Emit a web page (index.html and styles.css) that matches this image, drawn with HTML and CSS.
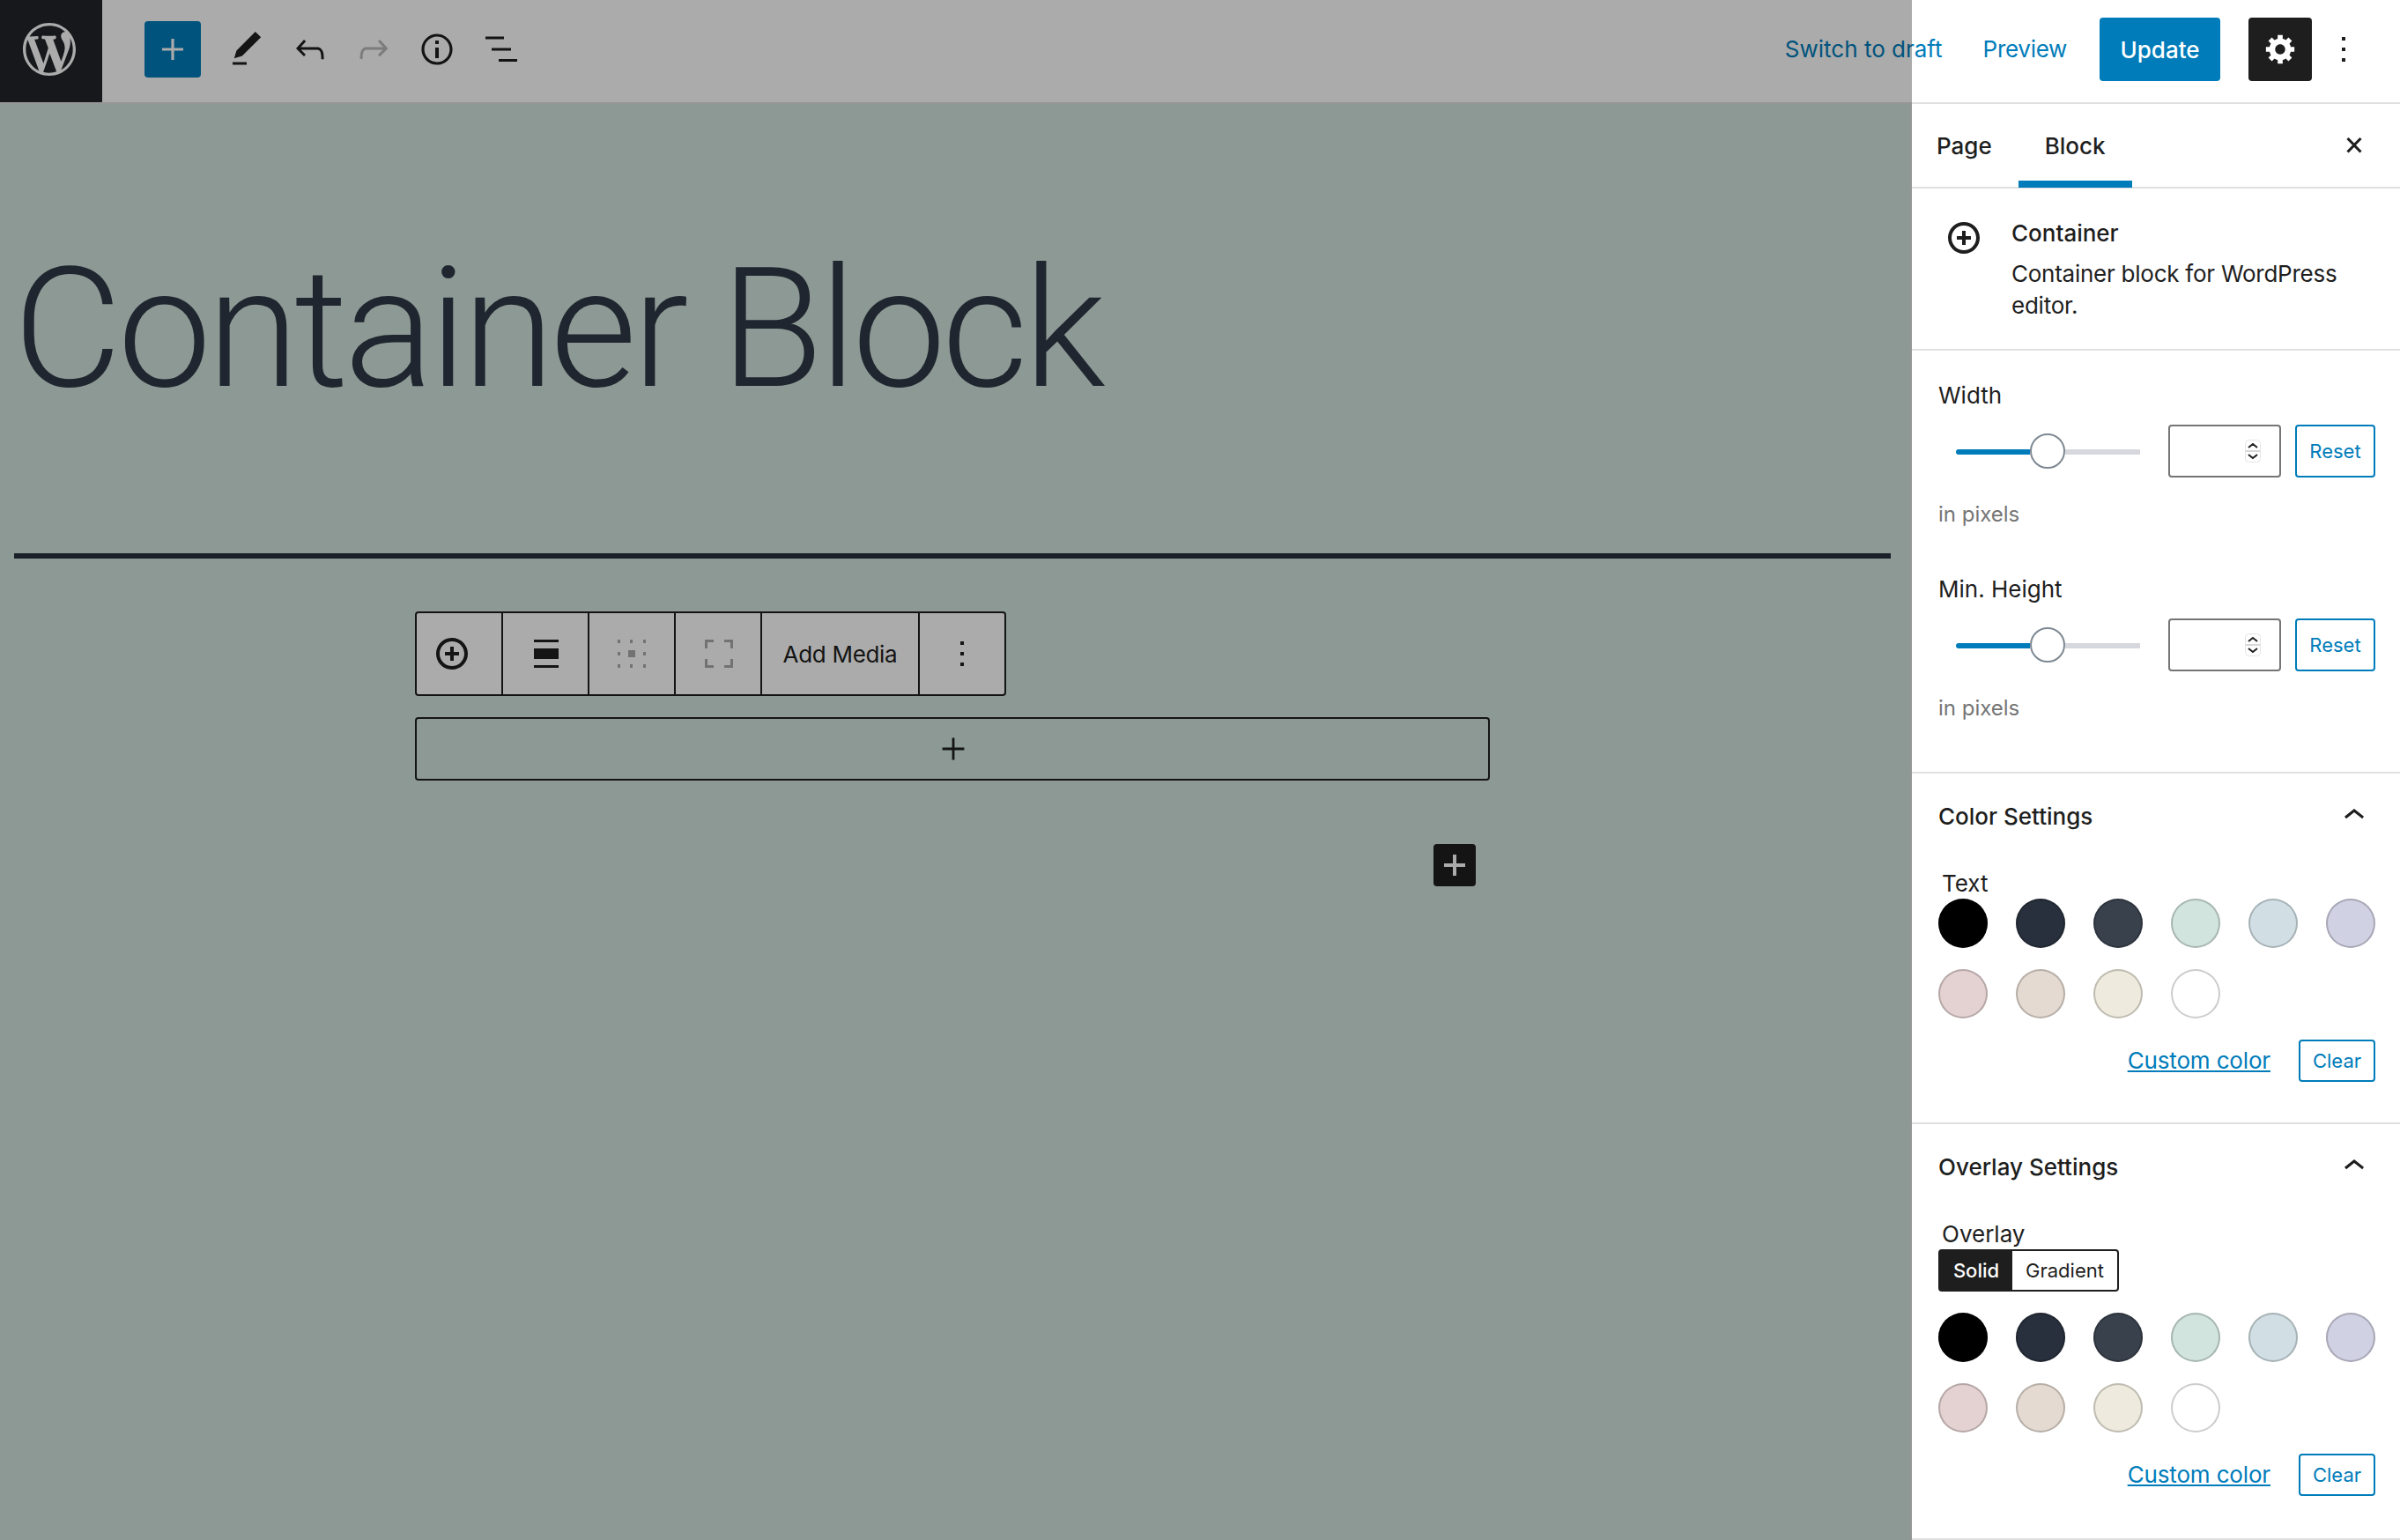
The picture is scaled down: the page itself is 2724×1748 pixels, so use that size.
FILE: index.html
```html
<!DOCTYPE html>
<html lang="en">

<head>
    <meta charset="UTF-8">
    <meta name="viewport" content="width=device-width, initial-scale=1.0">
    <title>Edit Page</title>
    <link rel="stylesheet" href="styles.css">
</head>

<body>
    <div class="app">
        <header class="topbar">
            <div class="wp-logo">
                <svg class="wp-mark" viewBox="0 0 20 20"><path d="M20 10c0-5.51-4.49-10-10-10C4.48 0 0 4.49 0 10c0 5.52 4.48 10 10 10 5.51 0 10-4.48 10-10zM7.78 15.37L4.37 6.22c.55-.02 1.17-.08 1.17-.08.5-.06.44-1.13-.06-1.11 0 0-1.45.11-2.37.11-.18 0-.37 0-.58-.01C4.12 2.69 6.87 1.11 10 1.11c2.33 0 4.45.87 6.05 2.34-.68-.11-1.65.39-1.65 1.58 0 .74.45 1.36.9 2.1.35.61.55 1.36.55 2.46 0 1.49-1.4 5-1.4 5l-3.03-8.37c.54-.02.82-.17.82-.17.5-.05.44-1.25-.06-1.22 0 0-1.44.12-2.38.12-.87 0-2.33-.12-2.33-.12-.5-.03-.56 1.2-.06 1.22l.92.08 1.26 3.41zM17.41 10c.24-.64.74-1.87.43-4.25.7 1.29 1.05 2.71 1.05 4.25 0 3.29-1.73 6.24-4.4 7.78.97-2.59 1.94-5.2 2.92-7.78zM6.1 18.09C3.12 16.65 1.11 13.53 1.11 10c0-1.3.23-2.48.72-3.59C3.25 10.3 4.67 14.2 6.1 18.09zm4.03-6.63l2.58 6.98c-.86.29-1.76.45-2.71.45-.79 0-1.57-.11-2.29-.33.81-2.38 1.62-4.74 2.42-7.1z"/></svg>
            </div>
            <div class="tools">
                <button class="add-btn"><svg class="icon" viewBox="0 0 24 24"><path d="M18 11.2h-5.2V6h-1.6v5.2H6v1.6h5.2V18h1.6v-5.2H18z"/></svg></button>
                <svg class="icon" viewBox="0 0 24 24"><path d="M20.1 5.1L16.9 2 6.2 12.7l-1.3 4.4 4.5-1.3L20.1 5.1zM4 20.8h8v-1.5H4v1.5z"/></svg>
                <svg class="icon" viewBox="0 0 24 24"><path d="M18.3 11.7c-.6-.6-1.4-.9-2.3-.9H6.7l2.9-3.3-1.1-1-4.5 5L8.5 16l1-1-2.7-2.7H16c.5 0 .9.2 1.3.5 1 1 1 3.4 1 4.5v.3h1.5v-.2c0-1.5 0-4.3-1.5-5.7z"/></svg>
                <svg class="icon icon-off" viewBox="0 0 24 24"><path d="M15.6 6.5l-1.1 1 2.9 3.3H8c-.9 0-1.7.3-2.3.9-1.4 1.5-1.4 4.2-1.4 5.6v.2h1.5v-.3c0-1.1 0-3.5 1-4.5.3-.3.7-.5 1.3-.5h9.2L14.5 15l1.1 1.1 4.6-4.6-4.6-5z"/></svg>
                <svg class="icon" viewBox="0 0 24 24"><path d="M12 3.2c-4.8 0-8.8 3.9-8.8 8.8 0 4.8 3.9 8.8 8.8 8.8 4.8 0 8.8-3.9 8.8-8.8 0-4.8-4-8.8-8.8-8.8zm0 16c-4 0-7.2-3.3-7.2-7.2C4.8 8 8 4.8 12 4.8s7.2 3.3 7.2 7.2c0 4-3.2 7.2-7.2 7.2zM11 17h2v-6h-2v6zm0-8h2V7h-2v2z"/></svg>
                <svg class="icon" viewBox="0 0 24 24"><path d="M3.5 4.8H14v1.5H3.5zM7 11.2h11v1.5H7zM11 17.5h10.5V19H11z"/></svg>
            </div>
            <div class="publish">
                <a class="link-btn link-draft">Switch to draft</a>
                <a class="link-btn link-preview">Preview</a>
                <button class="update-btn">Update</button>
                <button class="gear-btn"><svg class="gear" viewBox="-0.5 0.5 20 20"><path d="M18 12h-2.18c-.17.7-.44 1.35-.81 1.93l1.54 1.54-2.1 2.1-1.54-1.54c-.58.36-1.23.63-1.91.79V19H8v-2.18c-.68-.16-1.33-.43-1.91-.79l-1.54 1.54-2.12-2.12 1.54-1.54c-.36-.58-.63-1.23-.79-1.91H1V9.03h2.17c.16-.7.44-1.35.8-1.94L2.43 5.55l2.1-2.1 1.54 1.54c.58-.37 1.24-.64 1.93-.81V2h3v2.18c.68.16 1.33.43 1.91.79l1.54-1.54 2.12 2.12-1.54 1.54c.36.59.64 1.24.8 1.94H18V12zm-8.5 1.5c1.66 0 3-1.34 3-3s-1.34-3-3-3-3 1.34-3 3 1.34 3 3 3z"/></svg></button>
                <svg class="icon kebab" viewBox="0 0 24 24"><path d="M13 19h-2v-2h2v2zm0-6h-2v-2h2v2zm0-6h-2V5h2v2z"/></svg>
            </div>
        </header>

        <div class="workspace">
            <main class="editor">
                <h1 class="page-title">Container Block</h1>
                <hr class="title-rule">
                <div class="block-area">
                    <div class="block-toolbar">
                        <div class="tb-item"><svg class="tb-circle" viewBox="0 0 20 20"><path d="M10 1c-5 0-9 4-9 9s4 9 9 9 9-4 9-9-4-9-9-9zm0 16c-3.9 0-7-3.1-7-7s3.1-7 7-7 7 3.1 7 7-3.1 7-7 7zm1-11H9v3H6v2h3v3h2v-3h3V9h-3V6z"/></svg></div>
                        <div class="tb-item"><svg class="icon" viewBox="0 0 48 48"><path d="M11 8h28v3H11zM11 18h28v12H11zM11 37h28v3H11z"/></svg></div>
                        <div class="tb-item tb-off"><svg class="icon" viewBox="0 0 48 48"><path d="M8 8h3v4H8zM22 8h3v4h-3zM37 8h3v4h-3zM8 22h3v4H8zM20 20h8v8h-8zM37 22h3v4h-3zM8 36h3v4H8zM22 36h3v4h-3zM37 36h3v4h-3z"/></svg></div>
                        <div class="tb-item tb-off"><svg class="icon" viewBox="0 0 48 48"><path d="M9 8h10v3h-7v7H9zM31 8h10v10h-3v-7h-7zM9 30h3v7h7v3H9zM38 30h3v10H31v-3h7z"/></svg></div>
                        <div class="tb-item tb-text">Add Media</div>
                        <div class="tb-item tb-last"><svg class="icon" viewBox="0 0 24 24"><path d="M13 19h-2v-2h2v2zm0-6h-2v-2h2v2zm0-6h-2V5h2v2z"/></svg></div>
                    </div>
                    <div class="inserter"><svg class="icon" viewBox="0 0 24 24"><path d="M18.2 11.3h-5.5V5.800h-1.400v5.500H5.800v1.400h5.500v5.500h1.400v-5.500h5.500z"/></svg></div>
                    <div class="append-row">
                        <button class="append-btn"><svg class="icon" viewBox="0 0 24 24"><path d="M18 11h-5V6h-2v5H6v2h5v5h2v-5h5z"/></svg></button>
                    </div>
                </div>
            </main>

            <aside class="sidebar">
                <div class="tabs">
                    <span class="tab tab-first">Page</span>
                    <span class="tab tab-active">Block</span>
                    <svg class="icon close" viewBox="0 0 24 24"><path d="M13 11.900l3.300-3.400-1.100-1-3.200 3.300-3.200-3.300-1.100 1 3.300 3.400-3.300 3.400 1.100 1 3.200-3.300 3.200 3.300 1.100-1z"/></svg>
                </div>

                <section class="panel block-card">
                    <svg class="card-icon" viewBox="0 0 20 20"><path d="M10 1c-5 0-9 4-9 9s4 9 9 9 9-4 9-9-4-9-9-9zm0 16c-3.900 0-7-3.100-7-7s3.100-7 7-7 7 3.100 7 7-3.100 7-7 7zm1-11H9v3H6v2h3v3h2v-3h3V9h-3V6z"/></svg>
                    <div>
                        <div class="card-title">Container</div>
                        <div class="card-desc">Container block for WordPress editor.</div>
                    </div>
                </section>

                <section class="panel sizes">
                    <div class="field-label">Width</div>
                    <div class="range-row">
                        <div class="slider"><span class="slider-fill"></span><span class="slider-thumb"></span><span class="slider-rest"></span></div>
                        <div class="num-input">
                            <svg class="spin" viewBox="0 0 18 26"><rect x="0.500" y="0.500" width="17" height="25" rx="4" fill="#fff" stroke="#e4e4e4"/><path d="M1 13h16" stroke="#d8d8d8" stroke-width="2"/><path d="M4 9l5-4 5 4M4 17l5 4 5-4" fill="none" stroke="#1e1e1e" stroke-width="2"/></svg>
                        </div>
                        <button class="small-btn reset-btn">Reset</button>
                    </div>
                    <div class="help">in pixels</div>

                    <div class="field-label field-next">Min. Height</div>
                    <div class="range-row">
                        <div class="slider"><span class="slider-fill"></span><span class="slider-thumb"></span><span class="slider-rest"></span></div>
                        <div class="num-input">
                            <svg class="spin" viewBox="0 0 18 26"><rect x="0.500" y="0.500" width="17" height="25" rx="4" fill="#fff" stroke="#e4e4e4"/><path d="M1 13h16" stroke="#d8d8d8" stroke-width="2"/><path d="M4 9l5-4 5 4M4 17l5 4 5-4" fill="none" stroke="#1e1e1e" stroke-width="2"/></svg>
                        </div>
                        <button class="small-btn reset-btn">Reset</button>
                    </div>
                    <div class="help">in pixels</div>
                </section>

                <section class="panel colors">
                    <div class="panel-head">
                        <span>Color Settings</span>
                        <svg class="icon chevron" viewBox="0 0 24 24"><path d="M6.500 12.400L12 8l5.500 4.400-.9 1.200L12 10l-4.500 3.600-1-1.200z"/></svg>
                    </div>
                    <div class="color-label">Text</div>
                    <div class="swatches">
                        <span class="swatch c-black"></span><span class="swatch c-dark"></span><span class="swatch c-slate"></span><span class="swatch c-green"></span><span class="swatch c-blue"></span><span class="swatch c-purple"></span>
                        <span class="swatch c-red"></span><span class="swatch c-orange"></span><span class="swatch c-yellow"></span><span class="swatch c-white"></span>
                    </div>
                    <div class="color-actions">
                        <a class="custom-link">Custom color</a>
                        <button class="small-btn clear-btn">Clear</button>
                    </div>
                </section>

                <section class="panel colors colors-last">
                    <div class="panel-head">
                        <span>Overlay Settings</span>
                        <svg class="icon chevron" viewBox="0 0 24 24"><path d="M6.500 12.400L12 8l5.500 4.400-.9 1.200L12 10l-4.500 3.600-1-1.200z"/></svg>
                    </div>
                    <div class="color-label">Overlay</div>
                    <div class="toggle">
                        <span class="toggle-item toggle-on">Solid</span>
                        <span class="toggle-item">Gradient</span>
                    </div>
                    <div class="swatches">
                        <span class="swatch c-black"></span><span class="swatch c-dark"></span><span class="swatch c-slate"></span><span class="swatch c-green"></span><span class="swatch c-blue"></span><span class="swatch c-purple"></span>
                        <span class="swatch c-red"></span><span class="swatch c-orange"></span><span class="swatch c-yellow"></span><span class="swatch c-white"></span>
                    </div>
                    <div class="color-actions">
                        <a class="custom-link">Custom color</a>
                        <button class="small-btn clear-btn">Clear</button>
                    </div>
                </section>
            </aside>
        </div>

        <div class="dim-overlay"></div>
    </div>
</body>

</html>
```

FILE: styles.css
```css
* {
    box-sizing: border-box;
}

body {
    margin: 0;
    font-family: Inter, "Noto Sans", sans-serif;
    font-size: 26px;
    line-height: 36px;
    color: #1e1e1e;
    background-color: #fff;
}

button {
    font-family: inherit;
    padding: 0;
    border: 0;
    cursor: pointer;
}

.app {
    position: relative;
    display: flex;
    flex-direction: column;
    height: 1748px;
    overflow: hidden;
}

.dim-overlay {
    position: absolute;
    top: 0;
    left: 0;
    bottom: 0;
    width: 2170px;
    background-color: rgba(0, 0, 0, 0.33);
    pointer-events: none;
}

.icon {
    display: block;
    width: 48px;
    height: 48px;
    flex: none;
    fill: currentColor;
}

/* top bar */
.topbar {
    display: flex;
    align-items: center;
    height: 118px;
    flex: none;
    border-bottom: 2px solid #e0e0e0;
}

.wp-logo {
    display: flex;
    align-items: center;
    justify-content: center;
    width: 116px;
    height: 116px;
    padding: 0 4px 4px 0;
    background-color: #21242a;
}

.wp-mark {
    width: 60px;
    height: 60px;
    fill: #fff;
}

.tools {
    display: flex;
    align-items: center;
    gap: 24px;
    margin-left: 48px;
    margin-bottom: 4px;
}

.add-btn {
    display: flex;
    align-items: center;
    justify-content: center;
    width: 64px;
    height: 64px;
    margin-right: 4px;
    border-radius: 4px;
    color: #fff;
    background-color: #007cba;
}

.icon-off {
    opacity: 0.3;
}

.publish {
    display: flex;
    align-items: center;
    margin-left: auto;
    margin-bottom: 4px;
    padding-right: 40px;
}

.link-btn {
    color: #007cba;
}

.link-draft {
    margin-right: 46px;
}

.link-preview {
    margin-right: 37px;
    letter-spacing: -0.3px;
}

.update-btn {
    width: 137px;
    height: 72px;
    margin-right: 32px;
    border-radius: 4px;
    font-size: 26px;
    font-weight: 500;
    color: #fff;
    background-color: #007cba;
}

.gear-btn {
    display: flex;
    align-items: center;
    justify-content: center;
    width: 72px;
    height: 72px;
    margin-right: 12px;
    border-radius: 4px;
    background-color: #1e1e1e;
}

.gear {
    width: 38px;
    height: 38px;
    fill: #fff;
}

/* editor canvas */
.workspace {
    display: flex;
    flex: 1;
    min-height: 0;
}

.editor {
    flex: 1;
    padding: 0 22px 0 16px;
    background-color: #d1e4dd;
}

.page-title {
    margin: 155px 0 0 -1px;
    height: 200px;
    font-family: Roboto, sans-serif;
    font-size: 190px;
    font-weight: 300;
    line-height: 200px;
    letter-spacing: -5px;
    color: #303946;
}

.title-rule {
    height: 6px;
    margin: 155px 0 60px;
    border: 0;
    background-color: #28303d;
}

.block-area {
    width: 1220px;
    margin-left: 455px;
}

.block-toolbar {
    display: flex;
    width: 671px;
    height: 96px;
    border: 2px solid #1e1e1e;
    border-radius: 4px;
    background-color: #fff;
}

.tb-item {
    display: flex;
    align-items: center;
    justify-content: center;
    width: 98px;
    border-right: 2px solid #1e1e1e;
}

.tb-circle {
    width: 40px;
    height: 40px;
    margin-right: 16px;
    fill: currentColor;
}

.tb-off {
    color: #aaa;
}

.tb-text {
    width: 179px;
    padding-top: 2px;
    letter-spacing: -0.3px;
}

.tb-last {
    width: 96px;
    border-right: 0;
}

.inserter {
    display: flex;
    align-items: center;
    justify-content: center;
    height: 72px;
    margin-top: 24px;
    padding-left: 2px;
    border: 2px solid #1e1e1e;
    border-radius: 4px;
}

.append-row {
    display: flex;
    justify-content: flex-end;
    margin-top: 72px;
    padding-right: 16px;
}

.append-btn {
    display: flex;
    align-items: center;
    justify-content: center;
    width: 48px;
    height: 48px;
    border-radius: 4px;
    color: #fff;
    background-color: #1e1e1e;
}

/* settings sidebar */
.sidebar {
    width: 556px;
    flex: none;
    display: flex;
    flex-direction: column;
    border-left: 2px solid #e0e0e0;
    background-color: #fff;
}

.tabs {
    display: flex;
    align-items: flex-start;
    height: 96px;
    flex: none;
    border-bottom: 2px solid #e0e0e0;
}

.tab {
    display: flex;
    align-items: center;
    height: 95px;
    padding: 0 30px;
    font-weight: 500;
}

.tab-first {
    padding: 0 30px 0 28px;
}

.tab-active {
    box-shadow: inset 0 -8px 0 #007cba;
}

.close {
    margin: 23px 28px 0 auto;
}

.panel {
    padding: 0 28px 0 30px;
    border-bottom: 2px solid #e0e0e0;
}

.block-card {
    display: flex;
    height: 184px;
    padding-top: 33px;
}

.card-icon {
    flex: none;
    width: 40px;
    height: 40px;
    margin: 3px 34px 0 9px;
    fill: currentColor;
}

.card-title {
    margin-bottom: 10px;
    font-weight: 500;
}

.card-desc {
    width: 400px;
    letter-spacing: -0.25px;
}

.sizes {
    height: 480px;
    padding-top: 33px;
}

.field-label {
    margin-bottom: 15px;
}

.field-next {
    margin-top: 49px;
}

.range-row {
    display: flex;
    align-items: center;
    height: 60px;
    padding-left: 20px;
}

.slider {
    display: flex;
    align-items: center;
    width: 209px;
    margin-right: 32px;
}

.slider-fill {
    width: 84px;
    height: 6px;
    margin-top: 2px;
    border-radius: 3px 0 0 3px;
    background-color: #007cba;
}

.slider-thumb {
    width: 40px;
    height: 40px;
    border: 2px solid #7e8993;
    border-radius: 50%;
    background-color: #fff;
}

.slider-rest {
    flex: 1;
    height: 6px;
    margin-top: 2px;
    background-color: #d7d8de;
}

.num-input {
    display: flex;
    align-items: center;
    justify-content: flex-end;
    width: 128px;
    height: 60px;
    margin-right: 16px;
    padding-right: 21px;
    border: 2px solid #757575;
    border-radius: 4px;
}

.spin {
    width: 18px;
    height: 26px;
}

.small-btn {
    border: 2px solid #007cba;
    border-radius: 4px;
    font-size: 22px;
    color: #007cba;
    background-color: #fff;
}

.reset-btn {
    width: 91px;
    height: 60px;
}

.help {
    margin-top: 24px;
    font-size: 24px;
    color: #757575;
}

.colors {
    flex: none;
    padding-top: 31px;
    padding-bottom: 46px;
}

.colors-last {
    padding-bottom: 48px;
}

.panel-head {
    display: flex;
    align-items: center;
    justify-content: space-between;
    height: 36px;
    font-weight: 500;
}

.chevron {
    margin-top: -2px;
}

.color-label {
    height: 34px;
    margin-top: 41px;
    padding-left: 4px;
    line-height: 34px;
}

.toggle {
    display: flex;
    width: 205px;
    height: 48px;
    border: 2px solid #1e1e1e;
    border-radius: 4px;
    font-size: 22px;
    line-height: 44px;
}

.toggle-item {
    flex: 1;
    text-align: center;
}

.toggle-on {
    flex: none;
    width: 82px;
    font-weight: 500;
    color: #fff;
    background-color: #1e1e1e;
}

.swatches {
    display: grid;
    grid-template-columns: repeat(6, 56px);
    column-gap: 32px;
    row-gap: 24px;
}

.toggle + .swatches {
    margin-top: 24px;
}

.swatch {
    width: 56px;
    height: 56px;
    border-radius: 50%;
    box-shadow: inset 0 0 0 2px rgba(0, 0, 0, 0.2);
}

.c-black { background-color: #000; }
.c-dark { background-color: #28303d; }
.c-slate { background-color: #39414d; }
.c-green { background-color: #d1e4dd; }
.c-blue { background-color: #d1dfe4; }
.c-purple { background-color: #d1d1e4; }
.c-red { background-color: #e4d1d1; }
.c-orange { background-color: #e4dad1; }
.c-yellow { background-color: #eeeadd; }
.c-white { background-color: #fff; }

.color-actions {
    display: flex;
    align-items: center;
    justify-content: flex-end;
    gap: 32px;
    margin-top: 24px;
}

.custom-link {
    letter-spacing: -0.15px;
    color: #007cba;
    text-decoration: underline;
}

.clear-btn {
    width: 87px;
    height: 48px;
}
```
